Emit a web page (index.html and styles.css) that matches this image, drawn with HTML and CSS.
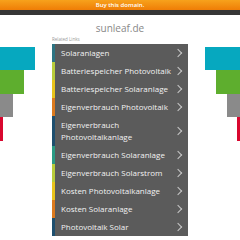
FILE: index.html
```html
<!DOCTYPE html>
<html lang="de">
<head>
  <meta charset="UTF-8">
  <meta name="viewport" content="width=device-width, initial-scale=1.0">
  <title>sunleaf.de</title>
  <link rel="stylesheet" href="styles.css">
</head>
<body>
  <div class="topbar">Buy this domain.</div>
  <div class="darkbar"></div>
  <h1 class="domain">sunleaf.de</h1>
  <div class="main">
    <div class="deco deco-left">
      <div class="bar bar-teal"></div>
      <div class="bar bar-green"></div>
      <div class="bar bar-gray"></div>
      <div class="bar bar-red"></div>
    </div>
    <div class="links">
      <div class="links-title">Related Links</div>
      <ul>
        <li class="c1"><a href="#">Solaranlagen</a></li>
        <li class="c2"><a href="#">Batteriespeicher Photovoltaik</a></li>
        <li class="c3"><a href="#">Batteriespeicher Solaranlage</a></li>
        <li class="c4"><a href="#">Eigenverbrauch Photovoltaik</a></li>
        <li class="c5"><a href="#">Eigenverbrauch Photovoltaikanlage</a></li>
        <li class="c6"><a href="#">Eigenverbrauch Solaranlage</a></li>
        <li class="c2"><a href="#">Eigenverbrauch Solarstrom</a></li>
        <li class="c3"><a href="#">Kosten Photovoltaikanlage</a></li>
        <li class="c4"><a href="#">Kosten Solaranlage</a></li>
        <li class="c5"><a href="#">Photovoltaik Solar</a></li>
      </ul>
    </div>
    <div class="deco deco-right">
      <div class="bar bar-teal"></div>
      <div class="bar bar-green"></div>
      <div class="bar bar-gray"></div>
      <div class="bar bar-red"></div>
    </div>
  </div>
</body>
</html>
```

FILE: styles.css
```css
body {
  margin: 0;
  font-family: "Open Sans", Arial, sans-serif;
  background-color: #fff;
}
.topbar {
  height: 10px;
  line-height: 10px;
  background: linear-gradient(#f7a21c, #ef7d06);
  color: #fff;
  font-size: 6px;
  font-weight: 600;
  text-align: center;
}
.darkbar {
  height: 5px;
  background-color: #363636;
}
.domain {
  margin: 6px 0 0;
  height: 14px;
  font-size: 10px;
  font-weight: normal;
  line-height: 14px;
  color: #888;
  text-align: center;
}
.main {
  display: flex;
  justify-content: space-between;
}
.deco {
  width: 52px;
  padding-top: 12px;
  display: flex;
  flex-direction: column;
}
.deco-right {
  align-items: flex-end;
}
.bar {
  height: 23px;
}
.bar-teal {
  width: 35px;
  background-color: #06a8bf;
}
.bar-green {
  width: 24px;
  height: 24px;
  background-color: #5eae2e;
}
.bar-gray {
  width: 13px;
  background-color: #8a8a8a;
}
.bar-red {
  width: 3px;
  height: 24px;
  background-color: #d9072f;
}
.links {
  width: 136px;
}
.links-title {
  height: 9px;
  font-size: 4.5px;
  line-height: 9px;
  color: #999;
}
.links ul {
  list-style: none;
  margin: 0;
  padding: 0;
  background-color: #5b5b5b;
}
.links li {
  border-left: 3px solid #2d7482;
}
.links a {
  display: flex;
  align-items: center;
  min-height: 18px;
  padding: 3px 12px 3px 6px;
  box-sizing: border-box;
  font-size: 8px;
  line-height: 12px;
  color: #f2f2f2;
  text-decoration: none;
  position: relative;
}
.links a::after {
  content: "";
  position: absolute;
  right: 7px;
  top: 50%;
  width: 5px;
  height: 5px;
  margin-top: -3px;
  border-top: 1px solid #c8c8c8;
  border-right: 1px solid #c8c8c8;
  transform: rotate(45deg);
}
.links li.c1 { border-left-color: #2d7482; }
.links li.c2 { border-left-color: #b8cc3a; }
.links li.c3 { border-left-color: #e8c41c; }
.links li.c4 { border-left-color: #dc7a1e; }
.links li.c5 { border-left-color: #1e4f6e; }
.links li.c6 { border-left-color: #2a9a84; }
```
